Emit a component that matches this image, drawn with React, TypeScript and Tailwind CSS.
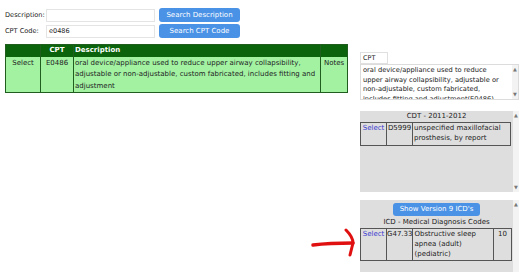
const font = { fontFamily: "Tahoma, 'DejaVu Sans', Verdana, sans-serif" };

function Scrollbar() {
  return (
    <div className="flex w-[6px] shrink-0 flex-col items-center justify-between bg-[#f3f3f3] py-[2px] text-[5px] leading-none text-[#777]">
      <span>▲</span>
      <span>▼</span>
    </div>
  );
}

const noteLines = [
  "oral device/appliance used to reduce",
  "upper airway collapsibility, adjustable or",
  "non-adjustable, custom fabricated,",
  "includes fitting and adjustment(E0486)",
];

export default function App() {
  return (
    <div
      className="relative h-[272px] w-[519px] overflow-hidden bg-white text-[7px] leading-[11px] text-[#222]"
      style={font}
    >
      <div className="flex">
        {/* left column */}
        <div className="w-[355px] pl-[5px] pt-[8px]">
          <div className="flex flex-col gap-[2px]">
            <div className="flex h-[14px] items-center">
              <span className="w-[41px] shrink-0 whitespace-nowrap text-[6.6px]">Description:</span>
              <div className="h-[13px] w-[109px] border border-[#e4e4e4] bg-white" />
              <button className="ml-[4px] h-[14px] w-[81px] rounded-[3px] bg-[#4a92e6] text-[7px] text-white">
                Search Description
              </button>
            </div>
            <div className="flex h-[14px] items-center">
              <span className="w-[41px] shrink-0 whitespace-nowrap text-[6.6px]">CPT Code:</span>
              <div className="flex h-[13px] w-[109px] items-center border border-[#e4e4e4] bg-white pl-[2px] text-[6.5px]">
                e0486
              </div>
              <button className="ml-[4px] h-[14px] w-[81px] rounded-[3px] bg-[#4a92e6] text-[7px] text-white">
                Search CPT Code
              </button>
            </div>
          </div>

          <table className="mt-[6px] w-[343px] border-collapse border border-[#1f5e1f] text-[7px] leading-[11.5px]">
            <thead>
              <tr className="h-[11px] bg-[#0b640b] text-white">
                <th className="w-[35px] border-r border-[#1f5e1f]" />
                <th className="w-[33px] border-r border-[#1f5e1f] text-center font-bold">CPT</th>
                <th className="border-r border-[#1f5e1f] pl-[1px] text-left font-bold">Description</th>
                <th className="w-[27px]" />
              </tr>
            </thead>
            <tbody>
              <tr className="bg-[#a2f2a2] align-top">
                <td className="border-r border-[#1f5e1f] pt-[1px] text-center">Select</td>
                <td className="border-r border-[#1f5e1f] pt-[1px] text-center">E0486</td>
                <td className="border-r border-[#1f5e1f] pl-[1px] pt-[1px]">
                  oral device/appliance used to reduce upper airway collapsibility,
                  adjustable or non-adjustable, custom fabricated, includes fitting and
                  adjustment
                </td>
                <td className="pt-[1px] text-center">Notes</td>
              </tr>
            </tbody>
          </table>
        </div>

        {/* right column */}
        <div className="ml-[5px] w-[159px] pt-[52px]">
          <div className="flex h-[12px] w-[28px] items-center border border-[#e0e0e0] pl-[2px] text-[6.5px]">
            CPT
          </div>
          <div className="flex h-[36px] border border-[#dcdcdc]">
            <div className="flex-1 overflow-hidden whitespace-nowrap pl-[2px] pt-[1px] text-[6.7px] leading-[9.5px]">
              {noteLines.map((l) => (
                <div key={l}>{l}</div>
              ))}
            </div>
            <Scrollbar />
          </div>

          <div className="mt-[11px] flex h-[81px] bg-[#dedede]">
            <div className="flex-1">
              <div className="text-center leading-[11px]">CDT - 2011-2012</div>
              <table className="w-[151px] border-collapse border border-[#555] text-[7px] leading-[10px]">
                <tbody>
                  <tr className="align-top">
                    <td className="w-[26px] border border-[#555] text-center text-[#3b3bd0]">Select</td>
                    <td className="w-[26px] border border-[#555] text-center">D5999</td>
                    <td className="border border-[#555] pb-[2px] pl-[1px]">
                      unspecified maxillofacial prosthesis, by report
                    </td>
                  </tr>
                </tbody>
              </table>
            </div>
            <Scrollbar />
          </div>

          <div className="mt-[8px] flex h-[80px] bg-[#dedede]">
            <div className="flex-1">
              <div className="flex justify-center pt-[3px]">
                <button className="h-[13px] w-[87px] rounded-[3px] bg-[#4a92e6] text-[7px] text-white">
                  Show Version 9 ICD's
                </button>
              </div>
              <div className="text-center leading-[12px]">ICD - Medical Diagnosis Codes</div>
              <table className="w-[152px] border-collapse border border-[#555] text-[7px] leading-[10px]">
                <tbody>
                  <tr className="align-top">
                    <td className="w-[26px] border border-[#555] text-center text-[#3b3bd0]">Select</td>
                    <td className="w-[20px] border border-[#555] text-center">G47.33</td>
                    <td className="border border-[#555] pb-[1px] pl-[1px]">
                      Obstructive sleep apnea (adult) (pediatric)
                    </td>
                    <td className="w-[18px] border border-[#555] text-center">10</td>
                  </tr>
                </tbody>
              </table>
            </div>
            <div className="flex w-[6px] flex-col items-center bg-[#f3f3f3] pt-[2px] text-[5px] leading-none text-[#777]">
              <span>▲</span>
            </div>
          </div>
        </div>
      </div>

      {/* hand-drawn annotation arrow */}
      <svg
        className="absolute left-[305px] top-[222px]"
        width="56"
        height="36"
        viewBox="0 0 56 36"
        fill="none"
      >
        <path
          d="M8 23 C 20 21.5, 34 21, 48 21"
          stroke="#e01010"
          strokeWidth="3.5"
          strokeLinecap="round"
        />
        <path
          d="M41 8 C 45 12, 48 17, 48 21 C 47 25, 46 29, 45 33"
          stroke="#e01010"
          strokeWidth="3"
          strokeLinecap="round"
          strokeLinejoin="round"
        />
      </svg>
    </div>
  );
}
